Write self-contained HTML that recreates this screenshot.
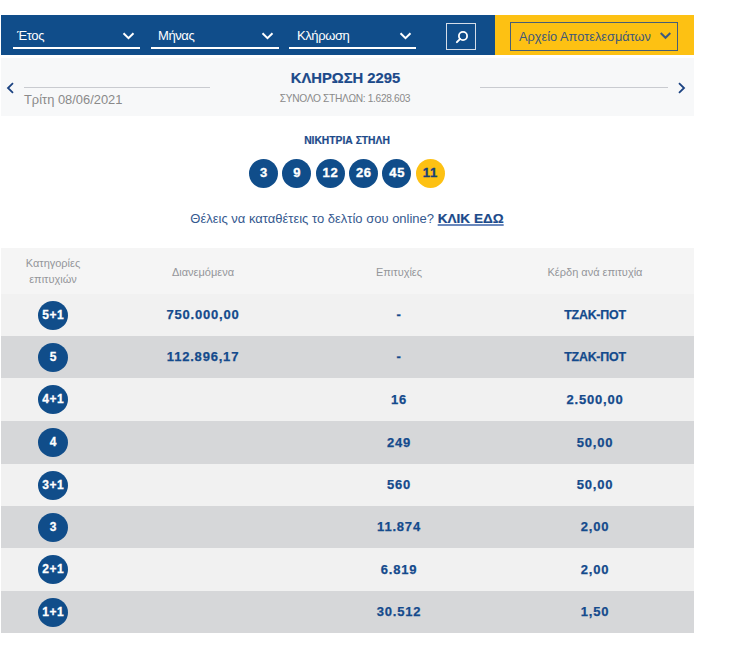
<!DOCTYPE html>
<html><head><meta charset="utf-8">
<style>
*{margin:0;padding:0;box-sizing:border-box}
html,body{width:734px;height:649px;background:#fff;overflow:hidden}
body{font-family:"Liberation Sans",sans-serif;position:relative}
.a{position:absolute}
.t{position:absolute;white-space:nowrap;line-height:1}
#bar{left:1px;top:15px;width:494px;height:40px;background:#104d8a}
#ybar{left:495px;top:15px;width:199px;height:40px;background:#fdc113}
.ul{position:absolute;top:47px;height:2px;background:#fff}
.sel{color:#fff;font-size:13px;letter-spacing:-0.4px}
.chev{position:absolute}
#srch{left:446px;top:23px;width:30px;height:27px;border:1px solid #d5dde8}
#arch{left:510px;top:22px;width:168px;height:29px;border:1.5px solid #465e78}
#band{left:1px;top:58px;width:693px;height:58px;background:#f7f8f9}
.ln{position:absolute;height:1px;background:#c9cbd0}
.ball{position:absolute;width:29px;height:29px;border-radius:50%;background:#104d8a;color:#fff;font-weight:bold;font-size:13px;letter-spacing:0.7px;text-indent:0.7px;text-align:center;line-height:27.5px;-webkit-text-stroke:0.35px #fff}
.yb{background:#fdc113;color:#173f78;-webkit-text-stroke:0.35px #173f78}
.row{position:absolute;left:1px;width:693px}
.c{position:absolute;text-align:center;color:#144a8c;font-weight:bold;font-size:13px;letter-spacing:0.8px;white-space:nowrap;-webkit-text-stroke:0.25px #144a8c}
.cw{font-size:12.4px;letter-spacing:-0.2px}
.hd{position:absolute;text-align:center;color:#94969a;font-size:11px;white-space:nowrap}
.cb{position:absolute;left:38px;width:30px;height:29px;border-radius:50%;background:#104d8a;color:#fff;font-weight:bold;font-size:12px;text-align:center;line-height:29px;letter-spacing:0.6px;text-indent:0.6px;-webkit-text-stroke:0.3px #fff}
</style></head><body>
<div id="bar" class="a"></div>
<div id="ybar" class="a"></div>
<div class="ul" style="left:13px;width:127px"></div>
<div class="ul" style="left:151px;width:128px"></div>
<div class="ul" style="left:289px;width:127px"></div>
<div class="t sel" style="left:17px;top:28.8px">Έτος</div>
<div class="t sel" style="left:158px;top:28.8px">Μήνας</div>
<div class="t sel" style="left:297px;top:28.8px">Κλήρωση</div>
<svg class="chev" style="left:122px;top:32px" width="13" height="8" viewBox="0 0 13 8"><path d="M1.5 1.2 L6.5 6.2 L11.5 1.2" fill="none" stroke="#fff" stroke-width="2"/></svg>
<svg class="chev" style="left:261px;top:32px" width="13" height="8" viewBox="0 0 13 8"><path d="M1.5 1.2 L6.5 6.2 L11.5 1.2" fill="none" stroke="#fff" stroke-width="2"/></svg>
<svg class="chev" style="left:399px;top:32px" width="13" height="8" viewBox="0 0 13 8"><path d="M1.5 1.2 L6.5 6.2 L11.5 1.2" fill="none" stroke="#fff" stroke-width="2"/></svg>
<div id="srch" class="a"></div>
<svg class="a" style="left:454px;top:29px" width="16" height="16" viewBox="0 0 16 16"><circle cx="9" cy="7" r="4.1" fill="none" stroke="#fff" stroke-width="1.8"/><path d="M6.1 9.9 L2.9 13.1" stroke="#fff" stroke-width="2" stroke-linecap="round"/></svg>
<div id="arch" class="a"></div>
<div class="t" style="left:519px;top:30.7px;font-size:12.8px;color:#3f5878">Αρχείο Αποτελεσμάτων</div>
<svg class="chev" style="left:660px;top:32px" width="12" height="9" viewBox="0 0 12 9"><path d="M0.7 1 L5.5 5.8 L10.3 1" fill="none" stroke="#3d5a80" stroke-width="2"/></svg>

<div id="band" class="a"></div>
<svg class="a" style="left:6px;top:82px" width="9" height="12" viewBox="0 0 9 12"><path d="M7 1.2 L2 6 L7 10.8" fill="none" stroke="#1c4382" stroke-width="1.8"/></svg>
<svg class="a" style="left:677px;top:82px" width="9" height="12" viewBox="0 0 9 12"><path d="M2 1.2 L7 6 L2 10.8" fill="none" stroke="#1c4382" stroke-width="1.8"/></svg>
<div class="ln" style="left:24px;top:87px;width:186px"></div>
<div class="ln" style="left:480px;top:87px;width:188px"></div>
<div class="t" style="left:24px;top:94px;font-size:12.9px;color:#8a8a8a">Τρίτη 08/06/2021</div>
<div class="t" style="left:-1.5px;width:694px;text-align:center;top:71px;font-size:14.8px;font-weight:bold;color:#1c4a8a;-webkit-text-stroke:0.2px #1c4a8a">ΚΛΗΡΩΣΗ 2295</div>
<div class="t" style="left:-2px;width:694px;text-align:center;top:93.5px;font-size:10.2px;letter-spacing:-0.33px;color:#8a8a8a">ΣΥΝΟΛΟ ΣΤΗΛΩΝ: 1.628.603</div>

<div class="t" style="left:0;width:694px;text-align:center;top:136px;font-size:10.3px;font-weight:bold;color:#1c4a8a;-webkit-text-stroke:0.2px #1c4a8a">ΝΙΚΗΤΡΙΑ ΣΤΗΛΗ</div>
<div class="ball" style="left:249px;top:159px">3</div>
<div class="ball" style="left:282.3px;top:159px">9</div>
<div class="ball" style="left:315.6px;top:159px">12</div>
<div class="ball" style="left:349px;top:159px">26</div>
<div class="ball" style="left:382.3px;top:159px">45</div>
<div class="ball yb" style="left:415.6px;top:159px">11</div>

<div class="t" style="left:0;width:694px;text-align:center;top:212px;font-size:13px;color:#35598f">Θέλεις να καταθέτεις το δελτίο σου online? <b style="font-size:13.6px;color:#1c4a8a;text-decoration:underline;text-decoration-color:#6a88bd;text-decoration-thickness:2px;text-underline-offset:1px;-webkit-text-stroke:0.2px #1c4a8a">ΚΛΙΚ ΕΔΩ</b></div>

<div class="row" style="top:248px;height:46px;background:#f5f5f5"></div>
<div class="hd" style="left:1px;width:104px;top:256px;line-height:15.5px">Κατηγορίες<br>επιτυχιών</div>
<div class="hd" style="left:105px;width:196px;top:266px">Διανεμόμενα</div>
<div class="hd" style="left:301px;width:196px;top:266px">Επιτυχίες</div>
<div class="hd" style="left:497px;width:196px;top:266px">Κέρδη ανά επιτυχία</div>
<div id="rows"></div>
<div class="row" style="top:294px;height:42px;background:#f1f1f1"></div>
<div class="cb" style="top:300.5px">5+1</div>
<div class="c" style="left:105px;width:196px;top:307.0px;line-height:16px">750.000,00</div>
<div class="c" style="left:301px;width:196px;top:307.0px;line-height:16px">-</div>
<div class="c" style="left:497px;width:196px;top:307.0px;line-height:16px"><span class="cw">ΤΖΑΚ-ΠΟΤ</span></div>
<div class="row" style="top:336px;height:42px;background:#d6d7d9"></div>
<div class="cb" style="top:342.5px">5</div>
<div class="c" style="left:105px;width:196px;top:349.0px;line-height:16px">112.896,17</div>
<div class="c" style="left:301px;width:196px;top:349.0px;line-height:16px">-</div>
<div class="c" style="left:497px;width:196px;top:349.0px;line-height:16px"><span class="cw">ΤΖΑΚ-ΠΟΤ</span></div>
<div class="row" style="top:378px;height:43px;background:#f1f1f1"></div>
<div class="cb" style="top:385.0px">4+1</div>
<div class="c" style="left:301px;width:196px;top:391.5px;line-height:16px">16</div>
<div class="c" style="left:497px;width:196px;top:391.5px;line-height:16px">2.500,00</div>
<div class="row" style="top:421px;height:43px;background:#d6d7d9"></div>
<div class="cb" style="top:428.0px">4</div>
<div class="c" style="left:301px;width:196px;top:434.5px;line-height:16px">249</div>
<div class="c" style="left:497px;width:196px;top:434.5px;line-height:16px">50,00</div>
<div class="row" style="top:464px;height:42px;background:#f1f1f1"></div>
<div class="cb" style="top:470.5px">3+1</div>
<div class="c" style="left:301px;width:196px;top:477.0px;line-height:16px">560</div>
<div class="c" style="left:497px;width:196px;top:477.0px;line-height:16px">50,00</div>
<div class="row" style="top:506px;height:42px;background:#d6d7d9"></div>
<div class="cb" style="top:512.5px">3</div>
<div class="c" style="left:301px;width:196px;top:519.0px;line-height:16px">11.874</div>
<div class="c" style="left:497px;width:196px;top:519.0px;line-height:16px">2,00</div>
<div class="row" style="top:548px;height:43px;background:#f1f1f1"></div>
<div class="cb" style="top:555.0px">2+1</div>
<div class="c" style="left:301px;width:196px;top:561.5px;line-height:16px">6.819</div>
<div class="c" style="left:497px;width:196px;top:561.5px;line-height:16px">2,00</div>
<div class="row" style="top:591px;height:42px;background:#d6d7d9"></div>
<div class="cb" style="top:597.5px">1+1</div>
<div class="c" style="left:301px;width:196px;top:604.0px;line-height:16px">30.512</div>
<div class="c" style="left:497px;width:196px;top:604.0px;line-height:16px">1,50</div>
</body></html>
